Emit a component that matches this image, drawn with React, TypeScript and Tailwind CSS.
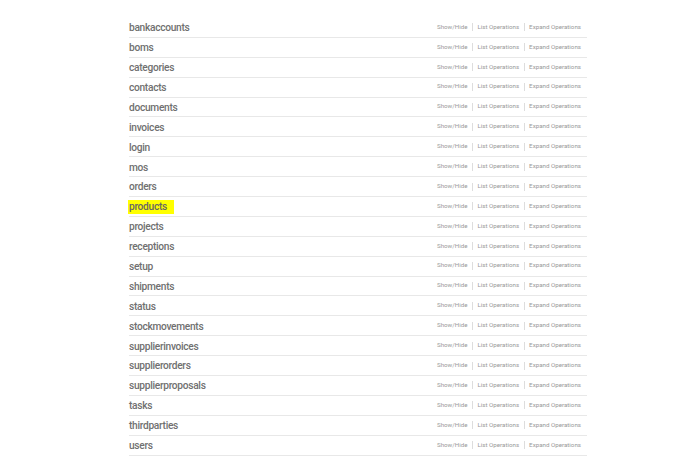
import React from "react";

const resources = [
  "bankaccounts",
  "boms",
  "categories",
  "contacts",
  "documents",
  "invoices",
  "login",
  "mos",
  "orders",
  "products",
  "projects",
  "receptions",
  "setup",
  "shipments",
  "status",
  "stockmovements",
  "supplierinvoices",
  "supplierorders",
  "supplierproposals",
  "tasks",
  "thirdparties",
  "users",
];

export default function App() {
  return (
    <div className="min-h-screen bg-white font-['Roboto',sans-serif]">
      <ul className="ml-[129px] w-[458px] pt-[18px]">
        {resources.map((name) => (
          <li
            key={name}
            className="flex h-[19.9px] items-center justify-between border-b border-[#e8e8e8]"
          >
            <h2 className="pt-[2px] text-[10.2px] font-medium leading-none tracking-[-0.3px] text-[#707070]">
              <span
                className={
                  name === "products"
                    ? "-ml-[1px] bg-[#ffff00] pb-[2px] pl-[1px] pr-[7px] pt-[1px] text-[#666]"
                    : ""
                }
              >
                {name}
              </span>
            </h2>
            <div className="flex items-center pr-[6px] text-[6.2px] text-[#999]">
              <a>Show/Hide</a>
              <span className="mx-[4.5px] h-[8px] border-l border-[#ddd]" />
              <a>List Operations</a>
              <span className="mx-[4.5px] h-[8px] border-l border-[#ddd]" />
              <a>Expand Operations</a>
            </div>
          </li>
        ))}
      </ul>
    </div>
  );
}
